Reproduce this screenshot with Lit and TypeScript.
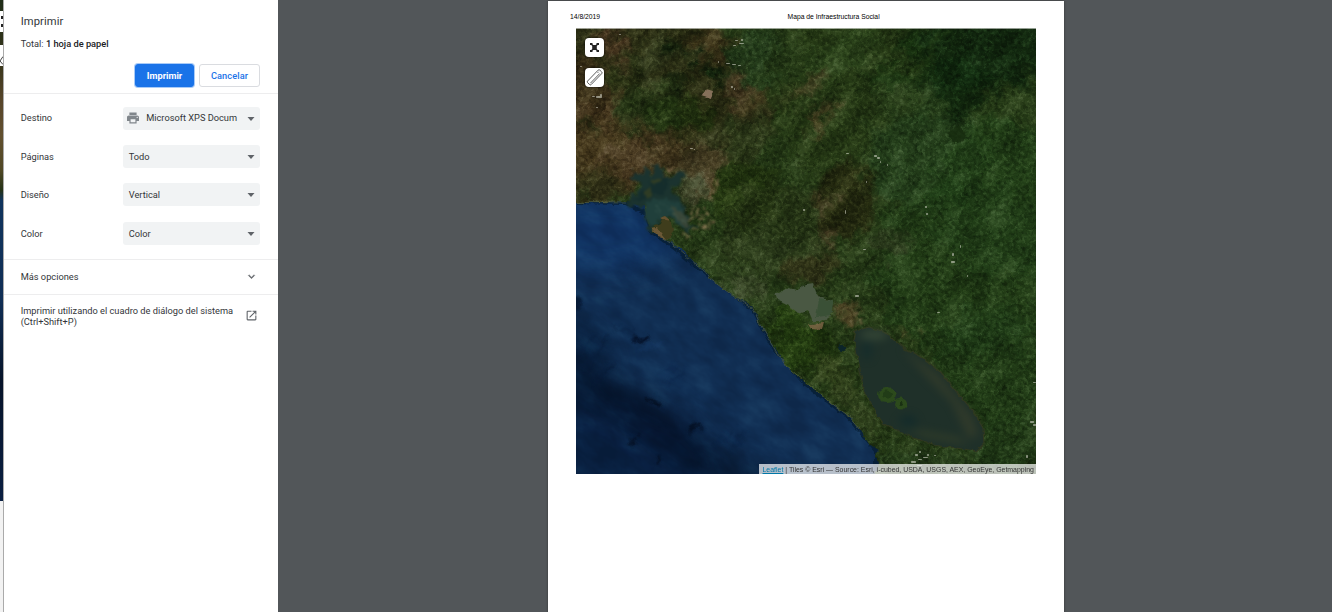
import { LitElement, html, svg, css } from "lit";
import { customElement, property } from "lit/decorators.js";

type Patch = [number, number, number, number, string, number, number?];

// cx, cy, rx, ry, colour, opacity, rotation
const terrain: Patch[] = [
  [60, 60, 110, 80, "#2c2d14", 0.9],
  [18, 125, 60, 46, "#4b3d20", 0.9],
  [10, 70, 28, 40, "#44341d", 0.7],
  [40, 22, 9, 24, "#543d27", 0.8, -20],
  [85, 130, 60, 20, "#493a20", 0.8],
  [70, 80, 34, 26, "#263716", 0.8],
  [50, 50, 20, 20, "#293515", 0.7],
  [100, 85, 40, 16, "#213310", 0.8],
  [78, 30, 9, 28, "#424e2a", 0.6],
  [95, 15, 9, 12, "#101f0c", 0.9],
  [115, 32, 9, 8, "#0d1e0c", 0.9],
  [143, 50, 8, 10, "#0c1c0b", 0.95, -30],
  [103, 58, 11, 9, "#12200c", 0.8],
  [62, 33, 7, 5, "#141f0c", 0.8],
  [170, 34, 7, 5, "#14240c", 0.8],
  [135, 15, 20, 18, "#44371d", 0.7],
  [165, 68, 14, 18, "#524028", 0.7, -30],
  [185, 80, 22, 14, "#44391e", 0.8],
  [220, 68, 14, 10, "#54432a", 0.6],
  [190, 30, 36, 30, "#243d1b", 0.8],
  [215, 95, 28, 20, "#1b2e10", 0.9],
  [155, 115, 50, 26, "#2f3619", 0.6, -30],
  [128, 135, 20, 14, "#4b4025", 0.8],
  [134, 158, 16, 10, "#654d32", 0.85, -50],
  [116, 160, 12, 18, "#4a4e32", 0.8],
  [22, 160, 40, 13, "#35361a", 0.8],
  [12, 101, 10, 6, "#202d12", 0.8],
  [170, 165, 34, 34, "#243710", 0.8],
  [205, 200, 60, 44, "#283617", 0.7],
  [270, 60, 80, 100, "#283c17", 0.7],
  [265, 25, 40, 20, "#2e471d", 0.8, -30],
  [248, 88, 5, 22, "#5c4a2b", 0.8, 28],
  [236, 58, 16, 5, "#54452a", 0.7, -35],
  [320, 50, 32, 10, "#16300f", 0.7],
  [345, 15, 26, 20, "#1a3412", 0.9],
  [350, 130, 60, 50, "#26451f", 0.7],
  [425, 170, 70, 80, "#234219", 0.8],
  [390, 240, 90, 90, "#224018", 0.7],
  [410, 20, 66, 44, "#13290f", 1],
  [375, 48, 42, 22, "#11280e", 0.9, -20],
  [385, 72, 20, 20, "#12290e", 0.9],
  [440, 18, 46, 36, "#13280f", 0.9],
  [268, 175, 28, 40, "#272a10", 0.85],
  [248, 175, 4, 10, "#57462c", 0.7],
  [252, 210, 9, 8, "#604e32", 0.8],
  [315, 215, 20, 12, "#374025", 0.6],
  [330, 70, 30, 20, "#2a421b", 0.5],
  [180, 230, 60, 20, "#334421", 0.7],
  [150, 240, 38, 14, "#2e421c", 0.7, 35],
  [168, 257, 18, 9, "#4b5535", 0.6, 20],
  [235, 240, 28, 14, "#39391c", 0.8],
  [218, 312, 26, 34, "#274212", 0.8],
  [245, 320, 18, 20, "#1d320e", 0.8],
  [272, 284, 17, 9, "#5e4b2c", 0.75, 20],
  [260, 350, 14, 26, "#39481f", 0.7, -30],
  [280, 380, 10, 34, "#364720", 0.8, -35],
  [345, 432, 48, 10, "#27401b", 0.8],
  [420, 340, 60, 60, "#213e18", 0.7],
  [430, 420, 40, 26, "#1f3916", 0.8],
  [331, 309, 6, 4, "#78603a", 0.7, 40],
  [19, 137, 3, 4, "#7e7257", 0.7],
];

const depths: Patch[] = [
  [20, 205, 90, 40, "#11376a", 0.75],
  [20, 430, 120, 60, "#081f40", 0.85],
  [-8, 335, 44, 44, "#09203f", 0.8],
  [25, 363, 70, 16, "#05142b", 0.8, 28],
  [85, 398, 74, 18, "#05142b", 0.85, 36],
  [145, 440, 60, 13, "#05152c", 0.85, 20],
];

const trenches: Patch[] = [
  [66, 311, 8, 3, "#030d22", 0.8, -8],
  [50, 303, 16, 3, "#0a2142", 0.5, 25],
  [20, 325, 20, 3, "#08203f", 0.7, -50],
  [28, 346, 16, 2, "#071a36", 0.7, -45],
  [10, 318, 14, 2, "#08203f", 0.7, -50],
  [78, 373, 7, 3, "#020b1c", 0.8, 25],
  [118, 402, 8, 4, "#020b1c", 0.7, -30],
  [57, 414, 3, 7, "#020b1c", 0.8, 12],
  [82, 434, 2, 6, "#020b1c", 0.6, 10],
  [0, 275, 5, 6, "#061833", 0.9],
  [100, 350, 12, 2, "#0c274c", 0.7, -40],
  [92, 342, 10, 2, "#0c274c", 0.6, -40],
  [150, 410, 12, 2, "#0a2346", 0.6, -45],
  [162, 412, 12, 2, "#0a2346", 0.6, -45],
  [75, 318, 14, 2, "#163a68", 0.5, -15],
];

const specks: [number, number, number, number][] = [
  [16, 68, 3, 1], [20, 68, 6, 2], [24, 66, 2, 3], [4, 38, 2, 1], [20, 79, 2, 1], [43, 6, 2, 1],
  [159, 12, 3, 1], [163, 15, 5, 1], [157, 17, 3, 1], [165, 11, 2, 2], [142, 33, 1, 2], [150, 35, 4, 1],
  [156, 36, 4, 1], [162, 37, 3, 1], [155, 58, 2, 2], [158, 60, 1, 2], [114, 120, 3, 1], [118, 121, 1, 1],
  [270, 125, 3, 1], [298, 127, 3, 2], [301, 129, 3, 2], [304, 133, 1, 2], [311, 136, 1, 2], [290, 153, 1, 2],
  [349, 178, 2, 2], [350, 185, 2, 2], [269, 182, 1, 4], [287, 221, 3, 1], [376, 225, 2, 3], [375, 233, 4, 2],
  [391, 247, 1, 2], [384, 217, 1, 3], [227, 181, 2, 2], [457, 354, 3, 1], [454, 393, 4, 2], [457, 396, 3, 2],
  [339, 426, 3, 2], [343, 423, 2, 2], [335, 433, 5, 2], [342, 431, 4, 1], [347, 429, 5, 1], [351, 426, 2, 2],
  [341, 437, 5, 1], [361, 284, 3, 1], [279, 267, 4, 2], [450, 427, 2, 3], [358, 427, 2, 1],
];

const ellipse = ([x, y, rx, ry, fill, op, rot = 0]: Patch) =>
  svg`<ellipse cx=${x} cy=${y} rx=${rx} ry=${ry} fill=${fill} opacity=${op} transform="rotate(${rot} ${x} ${y})"></ellipse>`;

const land =
  "M-9 -9H469V455H298L302 435L298 427L303 422L293 416L285 403L270 386L250 371L230 356L210 338L203 325L196 316L184 295L181 286L176 279L160 269L145 259L134 250L133 246L125 239L114 230L106 221L97 216L86 208L76 203L72 194L68 178L50 174L25 175L-9 174Z";

@customElement("satellite-map")
export class SatelliteMap extends LitElement {
  static styles = css`
    :host { display: block; position: relative; width: 460px; height: 446px; overflow: hidden; }
    .tiles { display: block; width: 460px; height: 446px; }
    .tiles filter { color-interpolation-filters: sRGB; }
    .grain { mix-blend-mode: soft-light; }
    .controls { position: absolute; left: 9px; top: 10px; display: flex; flex-direction: column; gap: 11px; }
    .control {
      width: 19px; height: 19px; border-radius: 4px; background: #fff;
      box-shadow: 0 0 2px 1px rgba(0, 0, 0, 0.4);
    }
    .control svg { display: block; width: 19px; height: 19px; }
    .credit {
      position: absolute; right: 0; bottom: 0; height: 10px; width: 277px;
      box-sizing: border-box; padding: .5px 0 0 3.500px;
      background: rgba(255, 255, 255, 0.7); color: #333; white-space: nowrap;
      font: 6.950px/10px "Liberation Sans", Arial, sans-serif;
    }
    .link { color: #0078a8; text-decoration: underline; }
  `;

  render() {
    return html`
      <svg class="tiles" viewBox="0 0 460 446">
        <defs>
          <filter id="deep" filterUnits="userSpaceOnUse" x="-100" y="-100" width="660" height="646"><feGaussianBlur stdDeviation="13"></feGaussianBlur></filter>
          <filter id="soft" x="-60%" y="-60%" width="220%" height="220%"><feGaussianBlur stdDeviation="4"></feGaussianBlur></filter>
          <filter id="wisps" filterUnits="userSpaceOnUse" x="-60" y="-60" width="580" height="566">
            <feGaussianBlur stdDeviation="4" result="b"></feGaussianBlur>
            <feTurbulence type="fractalNoise" baseFrequency="0.05" numOctaves="5" seed="8" result="n"></feTurbulence>
            <feDisplacementMap in="b" in2="n" scale="40" xChannelSelector="R" yChannelSelector="G"></feDisplacementMap>
          </filter>
          <filter id="trench" filterUnits="userSpaceOnUse" x="-20" y="-20" width="500" height="486">
            <feGaussianBlur stdDeviation="1.5" result="b"></feGaussianBlur>
            <feTurbulence type="fractalNoise" baseFrequency="0.08" numOctaves="3" seed="4" result="n"></feTurbulence>
            <feDisplacementMap in="b" in2="n" scale="14" xChannelSelector="R" yChannelSelector="G"></feDisplacementMap>
          </filter>
          <filter id="shore" filterUnits="userSpaceOnUse" x="-10" y="-10" width="480" height="466">
            <feTurbulence type="fractalNoise" baseFrequency="0.14" numOctaves="3" seed="3" result="n"></feTurbulence>
            <feDisplacementMap in="SourceGraphic" in2="n" scale="5" xChannelSelector="R" yChannelSelector="G" result="d"></feDisplacementMap>
            <feGaussianBlur in="d" stdDeviation="0.5"></feGaussianBlur>
          </filter>
          <filter id="inlet" filterUnits="userSpaceOnUse" x="-10" y="-10" width="480" height="466">
            <feTurbulence type="fractalNoise" baseFrequency="0.12" numOctaves="4" seed="12" result="n"></feTurbulence>
            <feDisplacementMap in="SourceGraphic" in2="n" scale="13" xChannelSelector="R" yChannelSelector="G" result="d"></feDisplacementMap>
            <feGaussianBlur in="d" stdDeviation="0.8"></feGaussianBlur>
          </filter>
          <filter id="fine" x="0" y="0" width="100%" height="100%">
            <feTurbulence type="fractalNoise" baseFrequency="0.26" numOctaves="3" seed="21"></feTurbulence>
            <feColorMatrix values="1.4 0 0 0 -0.24  1.4 0 0 0 -0.24  1.4 0 0 0 -0.24  0 0 0 0 1"></feColorMatrix>
          </filter>
          <filter id="ridges" x="0" y="0" width="100%" height="100%">
            <feTurbulence type="fractalNoise" baseFrequency="0.03 0.055" numOctaves="5" seed="5"></feTurbulence>
            <feColorMatrix values="1.8 0 0 0 -0.46  1.8 0 0 0 -0.46  1.8 0 0 0 -0.46  0 0 0 0 1"></feColorMatrix>
          </filter>
          <clipPath id="ground"><path d=${land}></path></clipPath>
        </defs>

        <rect width="460" height="446" fill="#112f54"></rect>
        <g filter="url(#deep)">${depths.map(ellipse)}</g>
        <g filter="url(#trench)">${trenches.map(ellipse)}</g>
        <g transform="rotate(35 230 223)">
          <rect class="grain" x="-120" y="-120" width="700" height="686" filter="url(#ridges)" opacity=".18"></rect>
        </g>
        <path d="M0 174L50 175L70 186L76 204L97 219L133 248L178 282L196 318L230 357L270 387L300 422V446" fill="none" stroke="#061c31" stroke-width="4" opacity=".75" filter="url(#shore)"></path>

        <g filter="url(#shore)">
          <g clip-path="url(#ground)">
            <rect x="-9" y="-9" width="478" height="464" fill="#263b17"></rect>
            <g filter="url(#wisps)">${terrain.map(ellipse)}</g>
            <rect class="grain" x="-9" y="-9" width="478" height="464" filter="url(#fine)" opacity=".42"></rect>
            <g transform="rotate(-48 230 223)">
              <rect class="grain" x="-120" y="-120" width="700" height="686" filter="url(#ridges)" opacity=".3"></rect>
            </g>
          </g>
        </g>
        <path d="M0 174.500L50 175M78 204L97 217L114 231L133 247L134 251L160 270L178 282L184 296L196 317L210 338L250 371L270 386L285 403" fill="none" stroke="#66704b" stroke-width=".8" opacity=".7" filter="url(#shore)"></path>

        <g filter="url(#inlet)">
          <path d="M52 175L59 163L66 158L56 150L55 141L62 146L70 141L75 148L79 137L87 141L87 150L95 148L104 145L111 146L105 153L97 163L105 174L112 190L119 198L113 203L105 199L98 191L88 188L78 197L77 207L70 196L68 180Z" fill="#1b332f"></path>
          <path d="M68 176L92 169L105 178L113 194L107 200L97 190L87 187L76 200L70 192Z" fill="#203f3b"></path>
          <path d="M95 175L106 183L116 198L109 200L99 187Z" fill="#444c39" opacity=".7"></path>
          <path d="M56 174L72 157L89 151L97 150L85 167Z" fill="#142c2c" opacity=".8"></path>
          <ellipse cx="73" cy="164" rx="3" ry="6" fill="#2f3c24"></ellipse>
          <ellipse cx="82" cy="154" rx="4" ry="2" fill="#313d24"></ellipse>
        </g>
        <path d="M76 178L92 192L106 198M84 173L101 188L112 197" fill="none" stroke="#547263" opacity=".35" filter="url(#inlet)"></path>
        <g filter="url(#shore)">
          <path d="M75 200L84 196L87 188L96 194L98 203L92 211L83 209Z" fill="#3f3d1c"></path>
          <path d="M75 200L80 199L90 211L83 209Z" fill="#6b5836"></path>
          <path d="M84 190L89 188L95 193L90 192Z" fill="#64512f"></path>

          <path d="M198 266L205 264L213 260L221 262L230 256L237 255L240 264L245 270L257 273L255 288L248 293L237 293L232 282L222 285L212 277L200 271Z" fill="#4a5843"></path>
          <path d="M243 271L257 273L255 288L240 290Z" fill="#3a5036"></path>

          <path d="M278 311L280 303L293 299L310 305L327 320L343 328L363 343L380 363L397 383L407 400L408 416L400 423L380 420L353 415L327 405L307 395L297 380L287 360L283 336Z" fill="#1f3029" stroke="#30381f" stroke-width="1.200"></path>
        </g>
        <g filter="url(#soft)" opacity=".7">
          <ellipse cx="298" cy="307" rx="14" ry="5" fill="#3e4f3b"></ellipse>
          <ellipse cx="291" cy="322" rx="5" ry="10" fill="#122b2c"></ellipse>
          <ellipse cx="332" cy="395" rx="9" ry="8" fill="#10292b"></ellipse>
          <path d="M325 320L362 346L396 388L403 408L392 410L376 375L350 348Z" fill="#373e2b"></path>
          <path d="M315 395L350 409L395 417L380 409L340 402Z" fill="#3c4429"></path>
        </g>
        <g filter="url(#shore)">
          <ellipse cx="311" cy="367" rx="9" ry="7" fill="#2c4a1c"></ellipse>
          <ellipse cx="311" cy="367" rx="5" ry="3.500" fill="#213c17"></ellipse>
          <path d="M318 370L323 374" stroke="#2c4a1c" stroke-width="2"></path>
          <ellipse cx="325" cy="376" rx="6" ry="5.500" fill="#2c4a1c"></ellipse>
          <ellipse cx="325" cy="376" rx="2" ry="2" fill="#193012"></ellipse>
          <ellipse cx="266" cy="321" rx="3.500" ry="3" fill="#0c2429"></ellipse>
          <ellipse cx="381" cy="107" rx="8" ry="8" fill="#152a0e" opacity=".75"></ellipse>
          <path d="M126 68L135 71L137 63L130 61Z" fill="#85705a"></path>
          <path d="M232 296L248 295L246 302L235 301Z" fill="#806647" opacity=".8"></path>
        </g>
        <path d="M375 5C368 8 362 4 357 12C352 18 360 26 358 31C352 40 344 38 336 42M358 12C350 15 356 22 352 30C360 38 354 44 361 48" fill="none" stroke="#37521f" opacity=".6" filter="url(#inlet)"></path>
        <g fill="#a08160" opacity=".65" filter="url(#inlet)">
          <path d="M115 178h3v2h-3zM119 183h4v2h-4zM126 179h3v3h-3zM131 184h4v4h-4zM123 190h5v2h-5zM130 193h3v5h-3zM116 201h5v2h-5zM136 190h2v5h-2zM112 190h4v1h-4zM125 199h6v2h-6zM120 187h3v1h-3zM127 186h2v2h-2zM133 198h2v3h-2zM120 195h3v2h-3zM115 183h2v3h-2zM278 284h6v4h-6zM284 291h4v4h-4zM268 278h5v2h-5zM105 205h8v2h-8zM90 140h7v2h-7zM98 143h5v1h-5zM140 155h5v2h-5z"></path>
        </g>
        <g fill="#d3d4c7" opacity=".6">
          ${specks.map(([x, y, w, h]) => svg`<rect x=${x} y=${y} width=${w} height=${h} rx=".7"></rect>`)}
        </g>
        <rect width="460" height="1" fill="#fff" opacity=".55"></rect>
      </svg>

      <div class="controls">
        <div class="control">
          <svg viewBox="0 0 19 19"><path d="M5 5h2.500v1.200L8.300 7h2.400l.8-.8V5H14v2h-1.200l-1 1v3l1 1H14v2h-2.500v-1.200l-.8-.8H8.300l-.8.8V14H5v-2h1.200l1-1V8l-1-1H5z" fill="#222"></path></svg>
        </div>
        <div class="control">
          <svg viewBox="0 0 19 19"><g fill="none" stroke="#555" stroke-width=".9" transform="rotate(-46 9.500 9.500)"><rect x="1" y="7" width="17.500" height="5" rx="1.200"></rect><path d="M2.500 10.500H16M15 8.500h1.500"></path></g></svg>
        </div>
      </div>
      <div class="credit"><span class="link">Leaflet</span> | Tiles © Esri — Source: Esri, i-cubed, USDA, USGS, AEX, GeoEye, Getmapping</div>
    `;
  }
}

@customElement("print-setting")
export class PrintSetting extends LitElement {
  @property() label = "";
  @property() value = "";
  @property({ type: Boolean }) printer = false;

  static styles = css`
    :host { display: flex; align-items: center; height: 38.400px; color: #333639; }
    .label { width: 102.500px; padding-bottom: .6px; }
    .select {
      display: flex; align-items: center; width: 137px; height: 23px; box-sizing: border-box;
      padding: 0 5.500px 0 5.500px; border-radius: 3px; background: #f1f3f4;
    }
    .icon { width: 12px; height: 12px; margin: 0 7px 0 -1.500px; fill: #80868b; }
    .value { flex: 1; white-space: nowrap; padding-bottom: .6px; }
    .caret { width: 8px; height: 4px; fill: #5f6368; margin-top: 1px; }
  `;

  render() {
    return html`
      <span class="label">${this.label}</span>
      <div class="select">
        ${this.printer
          ? html`<svg class="icon" viewBox="2 2 20 20"><path d="M19 8H5c-1.660 0-3 1.340-3 3v6h4v4h12v-4h4v-6c0-1.660-1.340-3-3-3zm-3 11H8v-5h8v5zm3-7c-.55 0-1-.45-1-1s.45-1 1-1 1 .45 1 1-.45 1-1 1zm-1-9H6v4h12V3z"></path></svg>`
          : null}
        <span class="value">${this.value}</span>
        <svg class="caret" viewBox="0 0 8 4"><path d="M.5 0h7L4 4z"></path></svg>
      </div>
    `;
  }
}

@customElement("app-root")
export class AppRoot extends LitElement {
  static styles = css`
    :host {
      display: flex; width: 1332px; height: 612px; overflow: hidden; background: #525659;
      font: 9.250px/11px Roboto, sans-serif; color: #333639;
    }
    .behind { display: flex; flex-direction: column; width: 4px; flex: none; box-sizing: border-box; border-right: 1px solid #aaa; background: #f2f2f2; }
    .sliver { display: block; width: 3px; height: 501px; }
    .panel { width: 273.500px; height: 612px; background: #fff; flex: none; }
    .header { height: 94px; box-sizing: border-box; padding: 15px 17.500px 0 16.700px; border-bottom: 1px solid #ededee; }
    .title { font-size: 11.200px; line-height: 13px; letter-spacing: .1px; }
    .total { margin-top: 10px; }
    .strong { font-weight: 500; color: #202124; }
    .actions { display: flex; justify-content: flex-end; gap: 5px; margin-top: 15px; }
    .button {
      height: 23px; box-sizing: border-box; border: 1px solid #dadce0; border-radius: 3px; width: 61px;
      background: #fff; color: #1a73e8; font: 500 9.200px/20px Roboto, sans-serif; letter-spacing: .1px; text-align: center; padding: 0;
    }
    .primary { width: 59px; background: #1a73e8; color: #fff; border-color: #1a73e8; box-shadow: 0 0 0 1px #a9cbf7; letter-spacing: 0; font-weight: 700; }
    .settings { padding: 5px 0 6px 16.700px; border-bottom: 1px solid #ededee; }
    .row { display: flex; align-items: center; justify-content: space-between; padding: 0 19.500px 0 16.700px; }
    .more { height: 34px; border-bottom: 1px solid #ededee; }
    .system { height: 42px; }
    .glyph { width: 13px; height: 13px; flex: none; fill: #5f6368; }
    .preview { flex: 1; display: flex; padding: 1px 0 0 270.500px; }
    .sheet { width: 515.500px; height: 612px; background: #fff; box-shadow: 0 0 2px #333; color: #000; font: 6.780px/8px "Liberation Sans", Arial, sans-serif; }
    .caption { display: grid; grid-template-columns: 217.500px auto; height: 27px; box-sizing: border-box; padding: 11.500px 22px 0; }
    .map { margin-left: 28px; }
  `;

  render() {
    return html`
      <div class="behind">
        <svg class="sliver" viewBox="0 0 3 501" preserveAspectRatio="none">
          <defs>
            <linearGradient id="edge" x2="0" y2="1">
              <stop offset="0" stop-color="#202d18"></stop><stop offset=".12" stop-color="#36351b"></stop>
              <stop offset=".2" stop-color="#57452a"></stop><stop offset=".27" stop-color="#62502f"></stop>
              <stop offset=".34" stop-color="#504825"></stop><stop offset=".38" stop-color="#243217"></stop>
              <stop offset=".4" stop-color="#10345d"></stop><stop offset=".6" stop-color="#102e55"></stop>
              <stop offset=".76" stop-color="#061329"></stop><stop offset="1" stop-color="#0a1f42"></stop>
            </linearGradient>
          </defs>
          <rect width="3" height="501" fill="url(#edge)"></rect>
          <rect y="11" width="3" height="21" fill="#fff"></rect>
          <rect y="45" width="3" height="21" fill="#fff"></rect>
          <path d="M1 16h2v3H1zM1 24h2v3H1z" fill="#222"></path>
          <path d="M3 56.500L0 61L3 64.500" fill="none" stroke="#444"></path>
        </svg>
      </div>
      <div class="panel">
        <div class="header">
          <div class="title">Imprimir</div>
          <div class="total">Total: <span class="strong">1 hoja de papel</span></div>
          <div class="actions">
            <button class="button primary">Imprimir</button>
            <button class="button">Cancelar</button>
          </div>
        </div>
        <div class="settings">
          <print-setting label="Destino" value="Microsoft XPS Docum" printer></print-setting>
          <print-setting label="Páginas" value="Todo"></print-setting>
          <print-setting label="Diseño" value="Vertical"></print-setting>
          <print-setting label="Color" value="Color"></print-setting>
        </div>
        <div class="row more">
          <span>Más opciones</span>
          <svg class="glyph" viewBox="0 0 24 24"><path d="M16.590 8.590L12 13.170L7.410 8.590L6 10l6 6l6-6z" stroke="#5f6368" stroke-width=".6"></path></svg>
        </div>
        <div class="row system">
          <span>Imprimir utilizando el cuadro de diálogo del sistema<br />(Ctrl+Shift+P)</span>
          <svg class="glyph" viewBox="0 0 24 24"><path d="M19 19H5V5h7V3H5a2 2 0 0 0-2 2v14a2 2 0 0 0 2 2h14c1.100 0 2-.9 2-2v-7h-2v7zM14 3v2h3.590l-9.830 9.830l1.410 1.410L19 6.410V10h2V3h-7z"></path></svg>
        </div>
      </div>
      <div class="preview">
        <div class="sheet">
          <div class="caption"><span>14/8/2019</span><span>Mapa de Infraestructura Social</span></div>
          <satellite-map class="map"></satellite-map>
        </div>
      </div>
    `;
  }
}
